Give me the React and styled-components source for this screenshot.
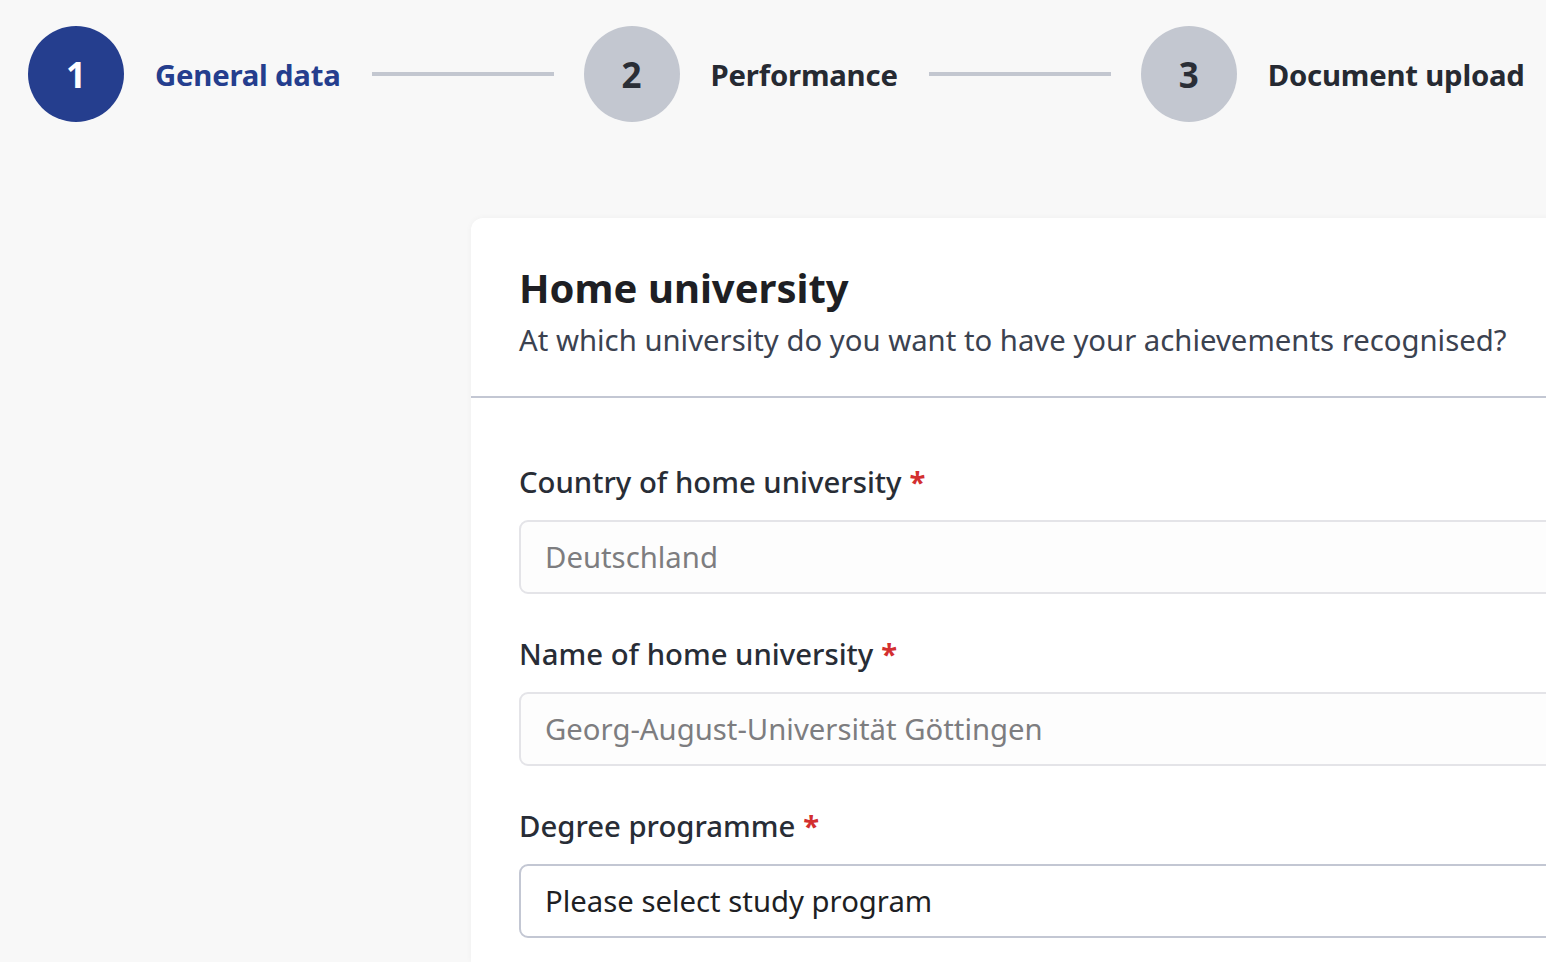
import React from "react";
import styled, { createGlobalStyle } from "styled-components";

const Global = createGlobalStyle`
  html, body { margin: 0; padding: 0; background: #f8f8f8; }
  body { font-family: "Noto Sans", "Open Sans", sans-serif; overflow: hidden; width: 1546px; height: 962px; }
  * { box-sizing: border-box; }
`;

const Page = styled.div`
  width: 1546px;
  height: 962px;
  overflow: hidden;
  display: flex;
  flex-direction: column;
`;

const Stepper = styled.div`
  display: flex;
  align-items: center;
  gap: 30px;
  padding: 26px 0 0 28px;
  white-space: nowrap;
`;

const Circle = styled.div`
  width: 96px;
  height: 96px;
  border-radius: 50%;
  flex: none;
  display: flex;
  align-items: center;
  justify-content: center;
  font-size: 35px;
  font-weight: 700;
  background: ${(p) => (p.$active ? "#253e8e" : "#c3c7d0")};
  color: ${(p) => (p.$active ? "#ffffff" : "#2a2e36")};
`;

const StepLabel = styled.span`
  font-size: 29.3px;
  font-weight: 700;
  letter-spacing: -0.2px;
  color: ${(p) => (p.$active ? "#253e8e" : "#262a32")};
  margin: 2px 1px 0 1px;
`;

const Connector = styled.div`
  width: 182px;
  height: 4px;
  background: #c3c7d0;
  flex: none;
`;

const Card = styled.section`
  margin: 96px 0 0 471px;
  width: 1200px;
  flex: 1;
  background: #ffffff;
  border-radius: 12px 0 0 0;
  box-shadow: 0 0 6px rgba(0, 0, 0, 0.04);
`;

const CardHeader = styled.header`
  padding: 44px 48px 36px;
  border-bottom: 2px solid #c3c7d3;
`;

const Title = styled.h1`
  margin: 0 0 6px;
  font-size: 40px;
  line-height: 52px;
  font-weight: 700;
  color: #1e1f24;
`;

const Subtitle = styled.p`
  margin: 0;
  font-size: 29.3px;
  line-height: 40px;
  color: #3b4250;
  white-space: nowrap;
`;

const Form = styled.div`
  padding: 66px 0 0 48px;
  display: flex;
  flex-direction: column;
  gap: 42px;
`;

const Field = styled.div`
  display: flex;
  flex-direction: column;
  gap: 20px;
`;

const Label = styled.label`
  font-size: 29.3px;
  line-height: 36px;
  font-weight: 500;
  color: #282d36;
`;

const Req = styled.span`
  color: #d32f2f;
  font-weight: 700;
  margin-left: 8px;
`;

const Box = styled.div`
  height: 74px;
  border-radius: 9px;
  border: 2px solid ${(p) => (p.$disabled ? "#e4e4e8" : "#c3c7d3")};
  background: ${(p) => (p.$disabled ? "#fdfdfd" : "#ffffff")};
  display: flex;
  align-items: center;
  padding-left: 24px;
  font-size: 29.3px;
  color: ${(p) => (p.$disabled ? "#7d7d80" : "#1e1f24")};
  white-space: nowrap;
`;

const steps = [
  { n: 1, label: "General data", active: true },
  { n: 2, label: "Performance" },
  { n: 3, label: "Document upload" },
];

const fields = [
  { label: "Country of home university", value: "Deutschland", disabled: true },
  { label: "Name of home university", value: "Georg-August-Universität Göttingen", disabled: true },
  { label: "Degree programme", value: "Please select study program" },
];

export default function App() {
  return (
    <Page>
      <Global />
      <Stepper>
        {steps.map((s, i) => (
          <React.Fragment key={s.n}>
            {i > 0 && <Connector />}
            <Circle $active={s.active}>{s.n}</Circle>
            <StepLabel $active={s.active}>{s.label}</StepLabel>
          </React.Fragment>
        ))}
      </Stepper>
      <Card>
        <CardHeader>
          <Title>Home university</Title>
          <Subtitle>At which university do you want to have your achievements recognised?</Subtitle>
        </CardHeader>
        <Form>
          {fields.map((f) => (
            <Field key={f.label}>
              <Label>
                {f.label}
                <Req>*</Req>
              </Label>
              <Box $disabled={f.disabled}>{f.value}</Box>
            </Field>
          ))}
        </Form>
      </Card>
    </Page>
  );
}
